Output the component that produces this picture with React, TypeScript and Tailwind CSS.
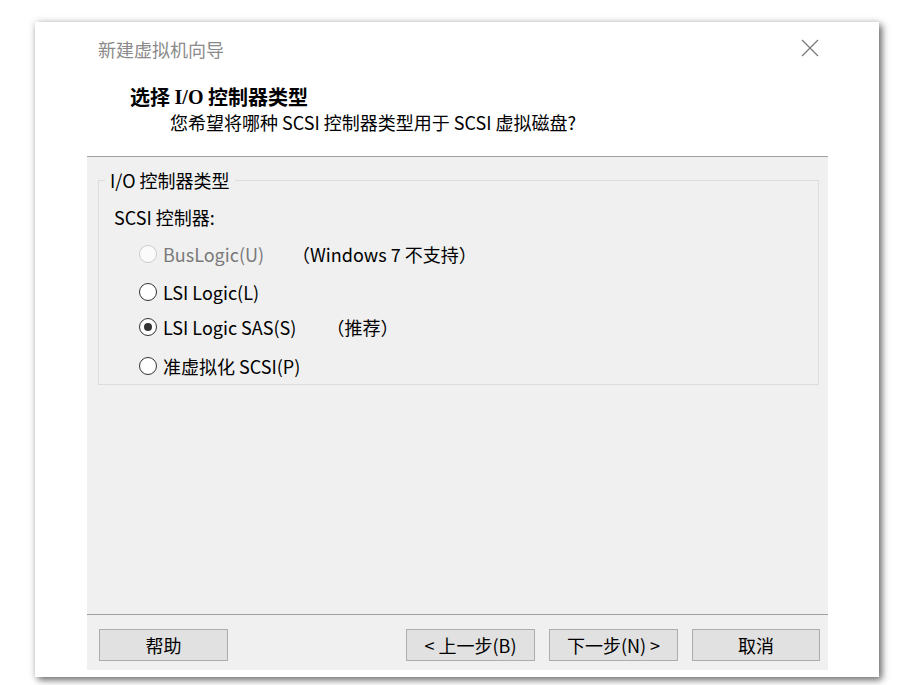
import React from "react";

const FONT = { fontFamily: '"Microsoft YaHei", "Noto Sans CJK SC", "Noto Sans", sans-serif' };

function Radio({ checked = false, disabled = false }: { checked?: boolean; disabled?: boolean }) {
  return (
    <span
      className={
        "flex h-[18px] w-[18px] shrink-0 items-center justify-center rounded-full border " +
        (disabled ? "border-[#cccccc] bg-[#fbfbfb]" : "border-[#333333] bg-white")
      }
    >
      {checked && <span className="h-[8px] w-[8px] rounded-full bg-[#333333]" />}
    </span>
  );
}

function Button({ children, w = "w-[129px]" }: { children: React.ReactNode; w?: string }) {
  return (
    <div className={"flex h-[32px] items-center justify-center border border-[#adadad] bg-[#e1e1e1] text-[18px] text-black " + w}>
      {children}
    </div>
  );
}

export default function App() {
  return (
    <div className="h-[685px] w-[900px] overflow-hidden bg-white pl-[35px] pt-[22px]" style={FONT}>
      <div className="flex h-[655px] w-[844px] flex-col bg-white shadow-[0_0_8px_rgba(0,0,0,0.12),3px_3px_7px_rgba(0,0,0,0.55)]">
        {/* title bar */}
        <div className="flex h-[54px] shrink-0 items-center justify-between pl-[63px] pr-[60px]">
          <span className="text-[18px] leading-[24px] text-[#8a8a8a]">新建虚拟机向导</span>
          <svg width="18" height="18" viewBox="0 0 18 18" className="mt-[-2px]">
            <path d="M1 1 L17 17 M17 1 L1 17" stroke="#777777" strokeWidth="1.2" fill="none" />
          </svg>
        </div>
        {/* heading */}
        <div className="mt-[9px] flex h-[24px] shrink-0 items-center whitespace-pre pl-[95px] text-[20px] font-bold leading-[24px] text-black">
          <span>选择 </span>
          <span style={{ fontFamily: '"Liberation Serif", serif' }}>I/O</span>
          <span> 控制器类型</span>
        </div>
        <div className="mt-[1px] h-[24px] shrink-0 pl-[135px] text-[18px] leading-[24px] text-black">
          您希望将哪种 SCSI 控制器类型用于 SCSI 虚拟磁盘?
        </div>
        {/* content panel */}
        <div className="ml-[52px] mt-[22px] flex h-[514px] w-[741px] shrink-0 flex-col border-t border-[#a0a0a0] bg-[#f0f0f0]">
          <fieldset className="ml-[11px] mr-[9px] mt-[11px] border border-[#dcdcdc] pb-[6px]">
            <legend className="ml-[6px] px-[5px] text-[18px] leading-[24px] text-black">I/O 控制器类型</legend>
            <div className="pl-[15px]">
              <div className="mt-[13px] flex h-[24px] items-center text-[18px] leading-[24px] text-black">SCSI 控制器:</div>
              <div className="ml-[25px] mt-[13px] flex h-[24px] items-center text-[18px] leading-[24px]">
                <Radio disabled />
                <span className="ml-[6px] text-[#7a7a7a]">BusLogic(U)</span>
                <span className="ml-[28px] text-black">（Windows 7 不支持）</span>
              </div>
              <div className="ml-[25px] mt-[14px] flex h-[24px] items-center text-[18px] leading-[24px] text-black">
                <Radio />
                <span className="ml-[6px]">LSI Logic(L)</span>
              </div>
              <div className="ml-[25px] mt-[11px] flex h-[24px] items-center text-[18px] leading-[24px] text-black">
                <Radio checked />
                <span className="ml-[6px]">LSI Logic SAS(S)</span>
                <span className="ml-[30px]">（推荐）</span>
              </div>
              <div className="ml-[25px] mt-[15px] flex h-[24px] items-center text-[18px] leading-[24px] text-black">
                <Radio />
                <span className="ml-[6px]">准虚拟化 SCSI(P)</span>
              </div>
            </div>
          </fieldset>
          <div className="flex-1" />
          <div className="flex h-[56px] shrink-0 items-start border-t border-[#a0a0a0] pl-[12px] pr-[8px] pt-[14px]">
            <Button>帮助</Button>
            <div className="flex-1" />
            <div className="flex gap-[14px]">
              <Button>&lt; 上一步(B)</Button>
              <Button>下一步(N) &gt;</Button>
              <Button w="w-[128px]">取消</Button>
            </div>
          </div>
        </div>
      </div>
    </div>
  );
}
